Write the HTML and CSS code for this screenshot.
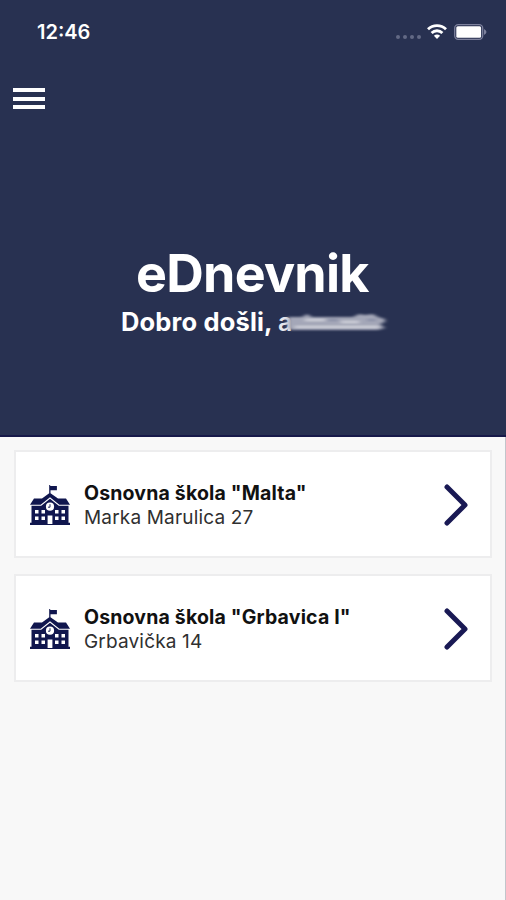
FILE: index.html
```html
<!DOCTYPE html>
<html lang="bs">
<head>
<meta charset="utf-8">
<title>eDnevnik</title>
<link rel="stylesheet" href="styles.css">
</head>
<body>
<svg class="symbols" aria-hidden="true">
  <symbol id="school" viewBox="0 0 40 40">
    <path fill="#10164e" d="M19.200 0h1v1h6.700v4.300h-6.400v3L28 13.500h8l4 6.200H29.300L20 12.200 10.700 19.700H0l4-6.200h8l7.200-5.200zM1.500 20.700h9.700L20 13.700l8.800 7h9.700v17H40V40H0v-2.300h1.500z"/>
    <circle cx="20" cy="21.700" r="4.100" fill="#fff"/>
    <path d="M20 19.200v3h-2" fill="none" stroke="#10164e" stroke-width=".9"/>
    <path fill="#fff" d="M5 25h3.500v3.500H5zm6.500 0H15v3.500h-3.500zM25 25h3.500v3.500H25zm6.500 0H35v3.500h-3.500zM5 31.500h3.500V35H5zm6.500 0H15V35h-3.500zm13.500 0h3.500V35H25zm6.500 0H35V35h-3.500zM17.600 30.500h4.800V39h-4.800z"/>
  </symbol>
  <symbol id="chevron" viewBox="0 0 24 42">
    <path d="M3 3l18 18L3 39" fill="none" stroke="#191954" stroke-width="5" stroke-linecap="round" stroke-linejoin="round"/>
  </symbol>
</svg>
<header class="hero">
  <div class="status">
    <span class="time">12:46</span>
    <div class="indicators">
      <span class="signal"><i></i><i></i><i></i><i></i></span>
      <svg class="wifi" viewBox="0 0 20 16"><g fill="none" stroke="#fff" stroke-width="2.800"><path d="M1 5.300C6 .4 14 .4 19 5.300"/><path d="M4.600 9c3-3 7.800-3 10.800 0"/></g><path fill="#fff" d="M6.900 11.700c1.800-1.500 4.400-1.500 6.200 0L10 15z"/></svg>
      <svg class="battery" viewBox="0 0 33 16"><rect x=".7" y=".7" width="28" height="14.600" rx="3.500" fill="none" stroke="#7d819d" stroke-width="1.300"/><rect x="2.300" y="2.300" width="24.800" height="11.400" rx="1.500" fill="#fff"/><path d="M30 5q5 3 0 6z" fill="#7d819d"/></svg>
    </div>
  </div>
  <button class="menu" aria-label="Meni"><i></i><i></i><i></i></button>
  <h1>eDnevnik</h1>
  <div class="welcome"><span class="greeting">Dobro došli,</span><span class="initial">a</span>
    <svg class="hidden-name" viewBox="0 0 100 30">
      <defs><filter id="smear" x="-10%" y="-40%" width="120%" height="180%"><feGaussianBlur stdDeviation="2.200 1.300"/></filter></defs>
      <g filter="url(#smear)">
        <path fill="#a4a7b8" d="M-3 10h14l5-3 5 3h41l6-3 6 1 8-1 5 3 7 2v3l-5 2 5 4-7 2H0l-3-2z"/>
        <path d="M4 20h84M14 13h20M50 15h18" stroke="#d4d5de" stroke-width="2" fill="none"/>
        <path d="M37 13h10M76 13h9" stroke="#858ba4" stroke-width="2"/>
      </g>
    </svg>
  </div>
</header>
<main class="schools">
  <article class="card">
    <svg class="school"><use href="#school"/></svg>
    <div class="info"><h2>Osnovna škola "Malta"</h2><p>Marka Marulica 27</p></div>
    <svg class="chevron"><use href="#chevron"/></svg>
  </article>
  <article class="card">
    <svg class="school"><use href="#school"/></svg>
    <div class="info"><h2>Osnovna škola "Grbavica I"</h2><p>Grbavička 14</p></div>
    <svg class="chevron"><use href="#chevron"/></svg>
  </article>
</main>
</body>
</html>
```
FILE: styles.css
```css
* { box-sizing: border-box; }
body { margin: 0; height: 900px; overflow: hidden; background: #f8f8f8; font-family: Inter, "Liberation Sans", sans-serif; display: flex; flex-direction: column; }
.symbols { display: none; }
.hero { height: 437px; flex: none; background: #283151; border-bottom: 2px solid #171949; color: #fff; display: flex; flex-direction: column; }
.status { height: 63px; padding: 0 19px 0 37px; display: flex; justify-content: space-between; align-items: center; }
.time { font-size: 20px; font-weight: 600; line-height: 24px; }
.indicators { display: flex; align-items: center; }
.signal { display: flex; gap: 3px; margin: 10px 6px 0 0; }
.signal i { width: 4px; height: 4px; border-radius: 50%; background: #626985; }
.wifi { width: 20px; height: 16px; margin-right: 7px; }
.battery { width: 33px; height: 16px; }
.menu { margin: 25px 0 0 13px; padding: 0; border: 0; background: none; width: 32px; height: 21px; display: flex; flex-direction: column; justify-content: space-between; }
.menu i { width: 32px; height: 4px; background: #fff; }
h1 { margin: 133px 0 0 136px; font-size: 52px; line-height: 64px; font-weight: 700; letter-spacing: -.75px; white-space: nowrap; }
.welcome { display: flex; height: 34px; margin: -1px 0 0 121px; align-items: center; }
.greeting { width: 157px; font-size: 25.500px; line-height: 34px; font-weight: 700; letter-spacing: .15px; white-space: nowrap; }
.initial { width: 14px; font-size: 25px; line-height: 34px; font-weight: 600; color: #e4e5ec; }
.hidden-name { width: 100px; height: 30px; flex: none; margin-left: -1px; overflow: visible; }
.schools { flex: 1; padding: 13px 13px 0 14px; border-right: 1px solid #c2c5cb; }
.card { height: 108px; margin-bottom: 16px; padding: 0 22px 0 14px; border: 2px solid #ededee; background: #fff; display: flex; align-items: center; }
.school { width: 40px; height: 40px; flex: none; margin-top: 1px; }
.info { flex: 1; margin: 3px 0 0 14px; color: #111; white-space: nowrap; }
h2 { margin: 0; font-size: 19.500px; line-height: 24px; font-weight: 700; letter-spacing: .17px; }
p { margin: 0; font-size: 19px; line-height: 25px; letter-spacing: .17px; color: #303030; }
.chevron { width: 24px; height: 42px; flex: none; margin-top: 2px; }
```
